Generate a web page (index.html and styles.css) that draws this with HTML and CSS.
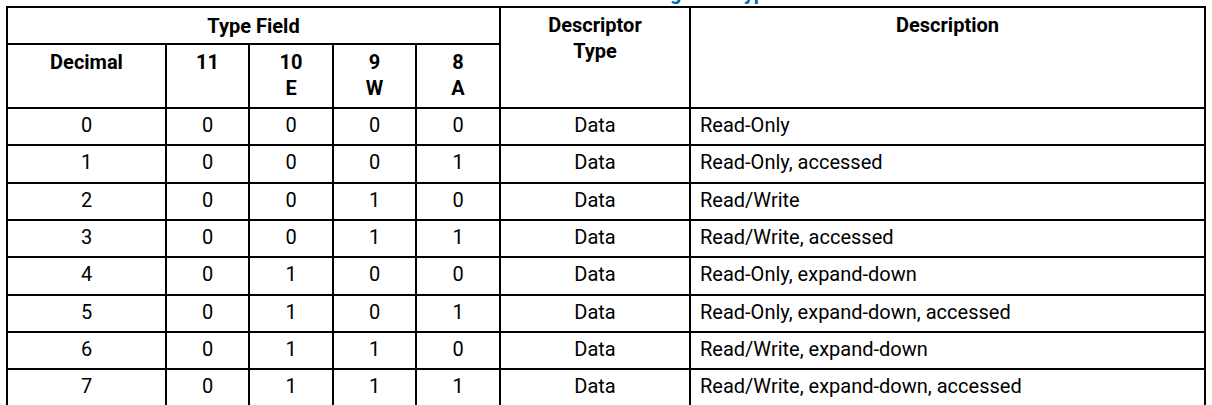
FILE: index.html
```html
<!DOCTYPE html>
<html>
<head>
<meta charset="utf-8">
<link rel="stylesheet" href="styles.css">
</head>
<body>
<div class="caption"><span class="caption-text">Table 3-1.  Code- and Data-Segment Types</span></div>
<div class="grid">
  <div class="h type-field mid">Type Field</div>
  <div class="h desc-type top">Descriptor<br>Type</div>
  <div class="h description top">Description</div>
  <div class="h top">Decimal</div>
  <div class="h top">11</div>
  <div class="h top">10<br>E</div>
  <div class="h top">9<br>W</div>
  <div class="h top">8<br>A</div>

  <div class="c">0</div><div class="c">0</div><div class="c">0</div><div class="c">0</div><div class="c">0</div><div class="c">Data</div><div class="d">Read-Only</div>
  <div class="c">1</div><div class="c">0</div><div class="c">0</div><div class="c">0</div><div class="c">1</div><div class="c">Data</div><div class="d">Read-Only, accessed</div>
  <div class="c">2</div><div class="c">0</div><div class="c">0</div><div class="c">1</div><div class="c">0</div><div class="c">Data</div><div class="d">Read/Write</div>
  <div class="c">3</div><div class="c">0</div><div class="c">0</div><div class="c">1</div><div class="c">1</div><div class="c">Data</div><div class="d">Read/Write, accessed</div>
  <div class="c">4</div><div class="c">0</div><div class="c">1</div><div class="c">0</div><div class="c">0</div><div class="c">Data</div><div class="d">Read-Only, expand-down</div>
  <div class="c">5</div><div class="c">0</div><div class="c">1</div><div class="c">0</div><div class="c">1</div><div class="c">Data</div><div class="d">Read-Only, expand-down, accessed</div>
  <div class="c">6</div><div class="c">0</div><div class="c">1</div><div class="c">1</div><div class="c">0</div><div class="c">Data</div><div class="d">Read/Write, expand-down</div>
  <div class="c">7</div><div class="c">0</div><div class="c">1</div><div class="c">1</div><div class="c">1</div><div class="c">Data</div><div class="d">Read/Write, expand-down, accessed</div>
</div>
</body>
</html>
```
FILE: styles.css
```css
html, body {
  margin: 0;
  padding: 0;
  background: #fff;
}
body {
  font-family: Roboto, "Liberation Sans", sans-serif;
  color: #000;
  overflow: hidden;
}
.caption {
  height: 6px;
  overflow: hidden;
  padding-left: 400px;
}
.caption-text {
  display: block;
  margin-top: -17px;
  font-weight: bold;
  font-size: 20px;
  line-height: 20px;
  color: #0068b5;
  white-space: pre;
}
.grid {
  margin: 0 0 0 6px;
  width: 1196px;
  padding: 2px;
  background: #000;
  display: grid;
  grid-template-columns: 157px 81px 82px 81px 82px 188px 513px;
  grid-template-rows: 35px 62px repeat(8, 35.333px);
  gap: 2px;
  font-size: 20px;
}
.grid > div {
  background: #fff;
  white-space: nowrap;
}
.h {
  font-weight: bold;
  text-align: center;
  line-height: 26px;
}
.type-field { grid-column: 1 / span 5; grid-row: 1; }
.desc-type { grid-column: 6; grid-row: 1 / span 2; }
.description { grid-column: 7; grid-row: 1 / span 2; }
.mid {
  display: flex;
  align-items: center;
  justify-content: center;
}
.top { padding-top: 4px; }
.c, .d {
  display: flex;
  align-items: center;
  padding-bottom: 3px;
}
.c { justify-content: center; }
.d { padding-left: 9px; }
```
